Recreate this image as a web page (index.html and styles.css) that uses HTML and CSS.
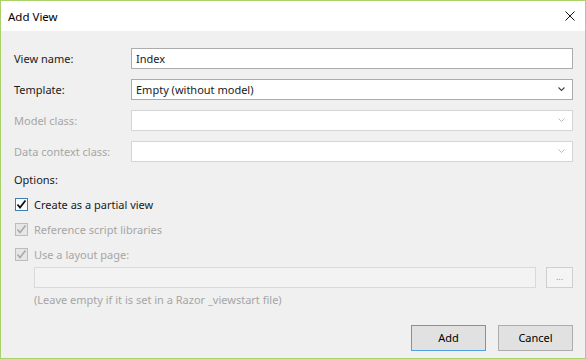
FILE: index.html
```html
<!DOCTYPE html>
<html lang="en">
<head>
    <meta charset="UTF-8">
    <title>Add View</title>
    <link rel="stylesheet" href="styles.css">
</head>
<body>
    <div class="window">
        <div class="titlebar">
            <span class="title">Add View</span>
            <svg class="close" width="10" height="10" viewBox="0 0 10 10">
                <path d="M0.5 0.5 L9.5 9.5 M9.5 0.5 L0.5 9.5" stroke="#111" stroke-width="1" fill="none"/>
            </svg>
        </div>
        <div class="content">
            <div class="form-grid">
                <label>View name:</label>
                <div class="field">Index</div>

                <label>Template:</label>
                <div class="field select">
                    <span>Empty (without model)</span>
                    <svg class="chevron" width="7" height="5" viewBox="0 0 7 5"><path d="M0.5 0.5 L3.5 3.5 L6.5 0.5" stroke="#444" stroke-width="1.1" fill="none"/></svg>
                </div>

                <label class="disabled">Model class:</label>
                <div class="field select">
                    <span></span>
                    <svg class="chevron" width="7" height="5" viewBox="0 0 7 5"><path d="M0.5 0.5 L3.5 3.5 L6.5 0.5" stroke="#bbb" stroke-width="1" fill="none"/></svg>
                </div>

                <label class="disabled">Data context class:</label>
                <div class="field select">
                    <span></span>
                    <svg class="chevron" width="7" height="5" viewBox="0 0 7 5"><path d="M0.5 0.5 L3.5 3.5 L6.5 0.5" stroke="#bbb" stroke-width="1" fill="none"/></svg>
                </div>
            </div>

            <div class="options-label">Options:</div>

            <div class="check-row">
                <span class="checkbox checked">
                    <svg width="11" height="11" viewBox="0 0 11 11"><path d="M1.5 5.5 L4 8.5 L9.5 1.5" stroke="#111" stroke-width="1.8" fill="none"/></svg>
                </span>
                <span>Create as a partial view</span>
            </div>
            <div class="check-row disabled">
                <span class="checkbox">
                    <svg width="11" height="11" viewBox="0 0 11 11"><path d="M1.5 5.5 L4 8.5 L9.5 1.5" stroke="#a8a8a8" stroke-width="1.6" fill="none"/></svg>
                </span>
                <span>Reference script libraries</span>
            </div>
            <div class="check-row disabled">
                <span class="checkbox">
                    <svg width="11" height="11" viewBox="0 0 11 11"><path d="M1.5 5.5 L4 8.5 L9.5 1.5" stroke="#a8a8a8" stroke-width="1.6" fill="none"/></svg>
                </span>
                <span>Use a layout page:</span>
            </div>

            <div class="layout-row">
                <div class="field path"></div>
                <div class="browse">...</div>
            </div>
            <div class="hint">(Leave empty if it is set in a Razor _viewstart file)</div>

            <div class="buttons">
                <div class="btn btn-default">Add</div>
                <div class="btn">Cancel</div>
            </div>
        </div>
    </div>
</body>
</html>
```

FILE: styles.css
```css
* {
    margin: 0;
    padding: 0;
    box-sizing: border-box;
    font-family: 'Noto Sans', 'Open Sans', sans-serif;
}

body {
    background: #f0f0f0;
}

.window {
    width: 586px;
    height: 359px;
    border: 1px solid #a9d36a;
    background: #f0f0f0;
    display: flex;
    flex-direction: column;
    font-size: 11px;
    color: #1a1a1a;
}

.titlebar {
    height: 30px;
    background: #fff;
    display: flex;
    align-items: center;
    justify-content: space-between;
    padding: 0 10px 0 7px;
}

.title {
    font-size: 11.5px;
    color: #000;
}

.content {
    flex: 1;
    display: flex;
    flex-direction: column;
    padding: 17px 12px 7px 13px;
}

.form-grid {
    display: grid;
    grid-template-columns: 117px 1fr;
    grid-auto-rows: 21px;
    row-gap: 10px;
    align-items: center;
}

.form-grid label {
    line-height: 21px;
}

.disabled {
    color: #a6a6a6;
}

.field {
    height: 21px;
    border: 1px solid #acacac;
    background: #fff;
    padding: 0 4px;
    line-height: 19px;
    display: flex;
    align-items: center;
    justify-content: space-between;
}

.disabled + .field {
    border-color: #d5d5d5;
}

.chevron {
    margin-right: 3px;
}

.options-label {
    margin-top: 10px;
    line-height: 16px;
}

.check-row {
    margin-left: 1px;
    height: 25px;
    display: flex;
    align-items: center;
    gap: 6px;
}

.options-label + .check-row {
    margin-top: 4px;
}

.checkbox {
    width: 13px;
    height: 13px;
    border: 1px solid #bcbcbc;
    background: #e6e6e6;
    display: flex;
    align-items: center;
    justify-content: center;
}

.checkbox.checked {
    border-color: #3c7fb1;
    background: #fff;
}

.layout-row {
    display: flex;
    gap: 10px;
    margin-left: 20px;
}

.field.path {
    flex: 1;
    border-color: #d9d9d9;
    background: #f3f3f3;
}

.browse {
    width: 27px;
    height: 21px;
    border: 1px solid #cfcfcf;
    background: #f4f4f4;
    color: #9a9a9a;
    font-size: 9px;
    text-align: center;
    line-height: 17px;
}

.hint {
    margin: 4px 0 0 20px;
    line-height: 16px;
    color: #a6a6a6;
}

.buttons {
    margin-top: auto;
    display: flex;
    justify-content: flex-end;
    gap: 12px;
}

.btn {
    width: 75px;
    height: 26px;
    border: 1px solid #adadad;
    background: #e1e1e1;
    color: #000;
    text-align: center;
    line-height: 24px;
}

.btn-default {
    border-color: #4fa0e0;
}
```
